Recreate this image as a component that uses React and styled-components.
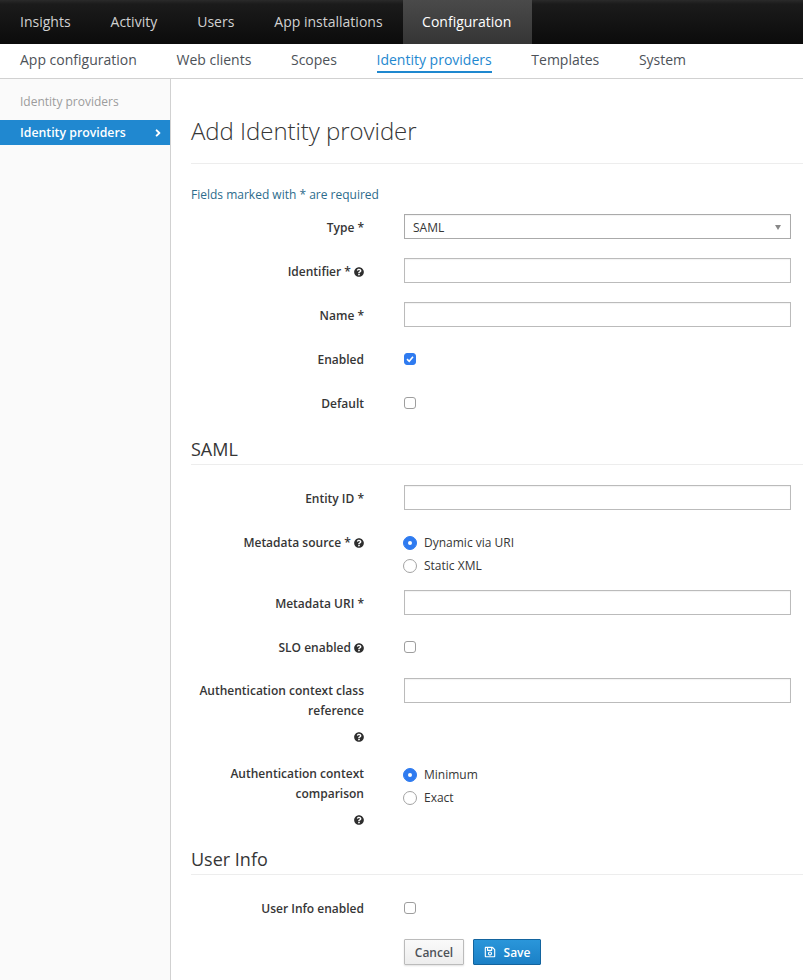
import React from 'react';
import styled, { createGlobalStyle } from 'styled-components';
import { FaQuestionCircle, FaRegSave, FaAngleRight } from 'react-icons/fa';

const Global = createGlobalStyle`
  html, body { margin: 0; padding: 0; background: #fff; }
  body { font-family: "Open Sans", "Liberation Sans", sans-serif; font-size: 12px; color: #363636; }
  * { box-sizing: border-box; }
`;

const Page = styled.div`width: 803px; height: 980px; overflow: hidden; display: flex; flex-direction: column;`;
const TopNav = styled.nav`
  height: 44px; flex: none; display: flex;
  background: linear-gradient(#2a2a2a 0, #1b1b1b 4px, #0b0b0b 100%);
`;
const TopItem = styled.div`
  padding: 0 ${p => (p.$active ? '20.5px 0 19.5px' : '20px')}; line-height: 44px; font-size: 14px;
  color: ${p => (p.$active ? '#fff' : '#d1d1d1')};
  background: ${p => (p.$active ? 'linear-gradient(#4a4a4a, #353535)' : 'transparent')};
  font-weight: ${p => (p.$active ? 500 : 400)};
`;
const SubNav = styled.nav`
  height: 35px; flex: none; display: flex; gap: 39.65px; padding-left: 20px;
  border-bottom: 1px solid #d1d1d1; background: #fff;
`;
const SubItem = styled.div`
  font-size: 14px; height: 29px; line-height: 32px; white-space: nowrap;
  color: ${p => (p.$active ? '#1f88cf' : '#4d5258')};
  border-bottom: ${p => (p.$active ? '2px solid #1f88cf' : '0')};
`;
const Body = styled.div`flex: 1; display: flex; min-height: 0;`;
const Side = styled.aside`
  width: 171px; flex: none; background: #fafafa; border-right: 1px solid #d1d1d1; padding-top: 14px;
`;
const SideTitle = styled.div`font-size: 12px; color: #9c9c9c; padding-left: 20px; height: 27px; line-height: 17px;`;
const SideActive = styled.div`
  width: 170px; height: 25px; background: #2088d0; color: #fff; font-size: 12.3px; font-weight: 600;
  display: flex; align-items: center; justify-content: space-between; padding: 0 6px 0 20px;
`;
const Main = styled.main`flex: 1; padding-left: 20px; min-width: 0;`;
const Title = styled.h1`
  margin: 0; height: 85px; padding-top: 35px; font-size: 24px; line-height: 34px; font-weight: 300;
  letter-spacing: -0.05px; color: #363636; border-bottom: 1px solid #ededed;
`;
const Note = styled.p`margin: 0; padding-top: 22px; height: 50px; line-height: 18px; font-size: 12px; color: #2d6c8c;`;
const Row = styled.div`display: grid; grid-template-columns: 173px 387px; column-gap: 40px; margin-bottom: ${p => p.$mb ?? 19}px; min-height: 25px;`;
const Label = styled.label`
  font-size: 12px; font-weight: 600; text-align: right; line-height: 20px; padding-top: 4px; color: #363636; display: block;
`;
const TallLabel = styled(Label)`padding-top: 3px;`;
const IconLine = styled.span`display: block; margin-top: 6px; height: 20px;`;
const Help = styled(FaQuestionCircle)`width: 10px; height: 10px; color: #2e2e2e; vertical-align: -1px;`;
const Input = styled.div`height: 25px; border: 1px solid #bbb; background: #fff; box-shadow: inset 0 1px 1px rgba(3,3,3,.05);`;
const Select = styled(Input)`
  display: flex; align-items: center; justify-content: space-between; padding: 1px 9px 0 8px;
  font-size: 12px; border-color: #aaa;
`;
const Caret = styled.span`
  width: 0; height: 0; border-left: 3.5px solid transparent; border-right: 3.5px solid transparent; border-top: 5px solid #888;
`;
const CheckCell = styled.div`height: 25px; display: flex; align-items: flex-start; padding-top: 7px;`;
const Box = styled.span`
  width: 12px; height: 12px; border-radius: 3px; display: flex; align-items: center; justify-content: center;
  background: ${p => (p.$on ? '#2f7bf0' : '#fff')};
  border: 1px solid ${p => (p.$on ? '#2f7bf0' : '#9e9e9e')};
`;
const Radios = styled.div`display: flex; flex-direction: column; margin-left: -1px; padding-top: 2px;`;
const RadioRow = styled.div`display: flex; align-items: center; gap: 7px; height: 23px; font-size: 12px; color: #363636;`;
const Dot = styled.span`
  width: 14px; height: 14px; border-radius: 50%; display: flex; align-items: center; justify-content: center;
  background: ${p => (p.$on ? '#2f7bf0' : '#fff')};
  border: 1px solid ${p => (p.$on ? '#2f7bf0' : '#a3a3a3')};
  &::after { content: ''; width: 4px; height: 4px; border-radius: 50%; background: ${p => (p.$on ? '#fff' : 'transparent')}; }
`;
const Section = styled.h2`
  margin: 0; font-size: 18px; font-weight: 400; line-height: 24px; color: #363636; padding-bottom: 3px;
  border-bottom: 1px solid #ededed; margin-bottom: 20px;
`;
const Buttons = styled.div`display: flex; gap: 9px; margin-left: 213px;`;
const Cancel = styled.button`
  width: 60px; height: 26px; padding: 0; font: 600 12px "Open Sans", sans-serif; color: #4d5258;
  border: 1px solid #bbb; border-radius: 1px; background: linear-gradient(#fafafa, #ededed);
  box-shadow: 0 1px 2px rgba(0,0,0,.12);
`;
const Save = styled.button`
  width: 68px; height: 26px; padding: 0; font: 600 12px "Open Sans", sans-serif; color: #fff;
  border: 1px solid #13649e; border-radius: 1px; background: linear-gradient(#2a96da, #1b80c6);
  display: flex; align-items: center; justify-content: center; gap: 8px;
`;

const H = () => <Help />;
const Check = ({ on }) => (
  <CheckCell>
    <Box $on={on}>
      {on && (
        <svg width="10" height="10" viewBox="0 0 10 10" fill="none">
          <path d="M2 5.2 L4.2 7.3 L8 2.8" stroke="#fff" strokeWidth="1.6" />
        </svg>
      )}
    </Box>
  </CheckCell>
);
const Radio = ({ on, children }) => <RadioRow><Dot $on={on} />{children}</RadioRow>;

export default function App() {
  return (
    <Page>
      <Global />
      <TopNav>
        <TopItem>Insights</TopItem>
        <TopItem>Activity</TopItem>
        <TopItem>Users</TopItem>
        <TopItem>App installations</TopItem>
        <TopItem $active>Configuration</TopItem>
      </TopNav>
      <SubNav>
        <SubItem>App configuration</SubItem>
        <SubItem>Web clients</SubItem>
        <SubItem>Scopes</SubItem>
        <SubItem $active>Identity providers</SubItem>
        <SubItem>Templates</SubItem>
        <SubItem>System</SubItem>
      </SubNav>
      <Body>
        <Side>
          <SideTitle>Identity providers</SideTitle>
          <SideActive>Identity providers <FaAngleRight size={12} /></SideActive>
        </Side>
        <Main>
          <Title>Add Identity provider</Title>
          <Note>Fields marked with * are required</Note>
          <Row><Label>Type *</Label><Select>SAML<Caret /></Select></Row>
          <Row><Label>Identifier * <H /></Label><Input /></Row>
          <Row><Label>Name *</Label><Input /></Row>
          <Row><Label>Enabled</Label><Check on /></Row>
          <Row $mb={22}><Label>Default</Label><Check /></Row>
          <Section>SAML</Section>
          <Row><Label>Entity ID *</Label><Input /></Row>
          <Row $mb={13}>
            <Label>Metadata source * <H /></Label>
            <Radios>
              <Radio on>Dynamic via URI</Radio>
              <Radio>Static XML</Radio>
            </Radios>
          </Row>
          <Row><Label>Metadata URI *</Label><Input /></Row>
          <Row $mb={19}><Label>SLO enabled <H /></Label><Check /></Row>
          <Row $mb={14}>
            <TallLabel>Authentication context class reference<IconLine><H /></IconLine></TallLabel>
            <Input />
          </Row>
          <Row $mb={17}>
            <TallLabel>Authentication context comparison<IconLine><H /></IconLine></TallLabel>
            <Radios>
              <Radio on>Minimum</Radio>
              <Radio>Exact</Radio>
            </Radios>
          </Row>
          <Section>User Info</Section>
          <Row $mb={19}><Label>User Info enabled</Label><Check /></Row>
          <Buttons>
            <Cancel>Cancel</Cancel>
            <Save><FaRegSave size={12} />Save</Save>
          </Buttons>
        </Main>
      </Body>
    </Page>
  );
}
